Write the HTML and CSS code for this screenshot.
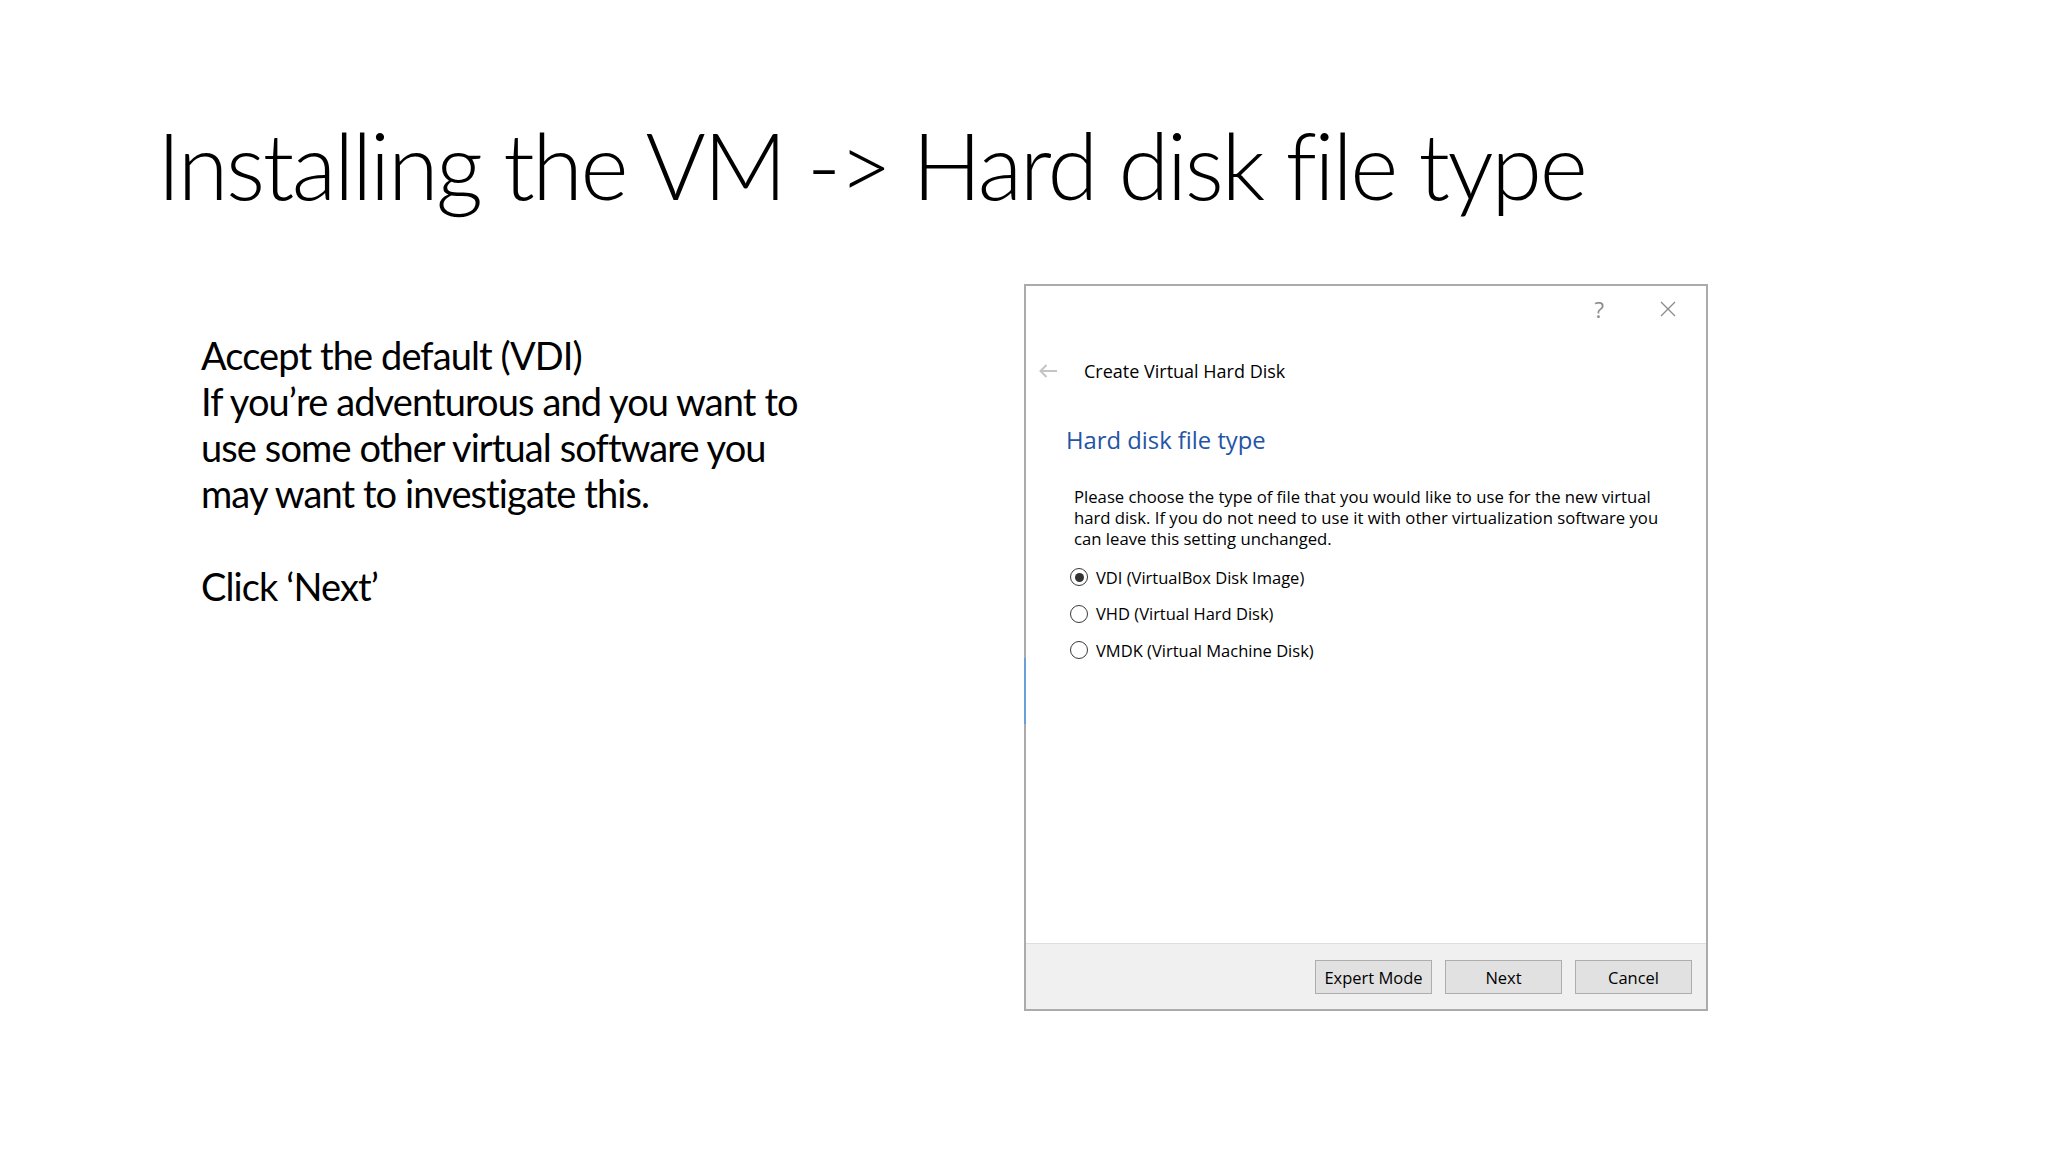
FILE: index.html
```html
<!DOCTYPE html>
<html lang="en">
<head>
    <meta charset="UTF-8">
    <meta name="viewport" content="width=device-width, initial-scale=1.0">
    <title>Installing the VM - Hard disk file type</title>
    <link rel="stylesheet" href="styles.css">
</head>
<body>
    <div class="slide">
        <h1 class="slide-title">Installing the VM -&gt; Hard disk file type</h1>
        <div class="content">
            <div class="notes">
                <p>Accept the default (VDI)<br>
                If you’re adventurous and you want to<br>
                use some other virtual software you<br>
                may want to investigate this.</p>
                <p>Click ‘Next’</p>
            </div>

            <div class="dialog">
                <div class="titlebar">
                    <span class="help">?</span>
                    <svg class="close" width="16" height="16" viewBox="0 0 16 16">
                        <path d="M1 1 L15 15 M15 1 L1 15" stroke="#8a8a8a" stroke-width="1.3" fill="none"/>
                    </svg>
                </div>
                <div class="wizard-head">
                    <svg class="back" width="20" height="16" viewBox="0 0 20 16">
                        <path d="M19 8 H2.5 M8.5 2 L2.5 8 L8.5 14" stroke="#c4c4c4" stroke-width="2" fill="none"/>
                    </svg>
                    <span class="wizard-title">Create Virtual Hard Disk</span>
                </div>
                <h2 class="page-title">Hard disk file type</h2>
                <p class="page-text">Please choose the type of file that you would like to use for the new virtual<br>
                hard disk. If you do not need to use it with other virtualization software you<br>
                can leave this setting unchanged.</p>
                <div class="options">
                    <div class="option"><span class="radio checked"></span>VDI (VirtualBox Disk Image)</div>
                    <div class="option"><span class="radio"></span>VHD (Virtual Hard Disk)</div>
                    <div class="option"><span class="radio"></span>VMDK (Virtual Machine Disk)</div>
                </div>
                <div class="footer">
                    <button>Expert Mode</button>
                    <button>Next</button>
                    <button>Cancel</button>
                </div>
            </div>
        </div>
    </div>
</body>
</html>
```

FILE: styles.css
```css
body {
    margin: 0;
    background-color: #ffffff;
    font-family: 'Lato', 'Open Sans', sans-serif;
    color: #000000;
}
.slide {
    width: 2048px;
    height: 1152px;
    overflow: hidden;
}
.slide-title {
    margin: 0;
    padding: 119px 0 0 157px;
    font-size: 92px;
    font-weight: 300;
    line-height: 1;
    letter-spacing: -2.4px;
    white-space: nowrap;
}
.content {
    display: flex;
    align-items: flex-start;
    margin-top: 73px;
    padding-left: 201px;
}
.notes {
    width: 823px;
    margin-top: 47.5px;
    font-size: 38px;
    line-height: 46.2px;
    letter-spacing: -0.9px;
}
.notes p {
    margin: 0 0 46.2px 0;
}

/* VirtualBox wizard */
.dialog {
    position: relative;
    width: 680px;
    height: 723px;
    border: 2px solid #ababab;
    display: flex;
    flex-direction: column;
    font-family: 'Open Sans', sans-serif;
    background-color: #ffffff;
}
.dialog::before {
    content: '';
    position: absolute;
    left: -2px;
    top: 372px;
    width: 2px;
    height: 66px;
    background-color: #6a9fdc;
}
.titlebar {
    height: 45px;
    display: flex;
    align-items: center;
    justify-content: flex-end;
    padding-right: 30px;
}
.help {
    font-size: 22px;
    color: #8a8a8a;
    margin-right: 56px;
}
.wizard-head {
    display: flex;
    align-items: center;
    height: 40px;
    margin-top: 20px;
    padding-left: 12px;
}
.back {
    margin-right: 26px;
}
.wizard-title {
    font-size: 18px;
}
.page-title {
    margin: 32px 0 0 40px;
    font-size: 23.8px;
    font-weight: 400;
    line-height: 34px;
    color: #2454a5;
}
.page-text {
    margin: 29px 0 0 48px;
    font-size: 16.7px;
    line-height: 21px;
}
.options {
    margin: 10px 0 0 44px;
}
.option {
    display: flex;
    align-items: center;
    height: 36.5px;
    font-size: 16.5px;
}
.radio {
    width: 18px;
    height: 18px;
    box-sizing: border-box;
    border: 1.8px solid #3a3a3a;
    border-radius: 50%;
    margin-right: 8px;
    display: flex;
    align-items: center;
    justify-content: center;
}
.radio.checked::after {
    content: '';
    width: 9px;
    height: 9px;
    border-radius: 50%;
    background-color: #333333;
}
.footer {
    margin-top: auto;
    height: 66px;
    border-top: 1px solid #dedede;
    background-color: #f0f0f0;
    display: flex;
    justify-content: flex-end;
    align-items: flex-start;
    gap: 13px;
    padding: 16px 14px 0 0;
    box-sizing: border-box;
}
.footer button {
    width: 117px;
    height: 34px;
    background-color: #e1e1e1;
    border: 1px solid #adadad;
    font-family: 'Open Sans', sans-serif;
    font-size: 16.5px;
    color: #000000;
    padding: 0;
}
```
